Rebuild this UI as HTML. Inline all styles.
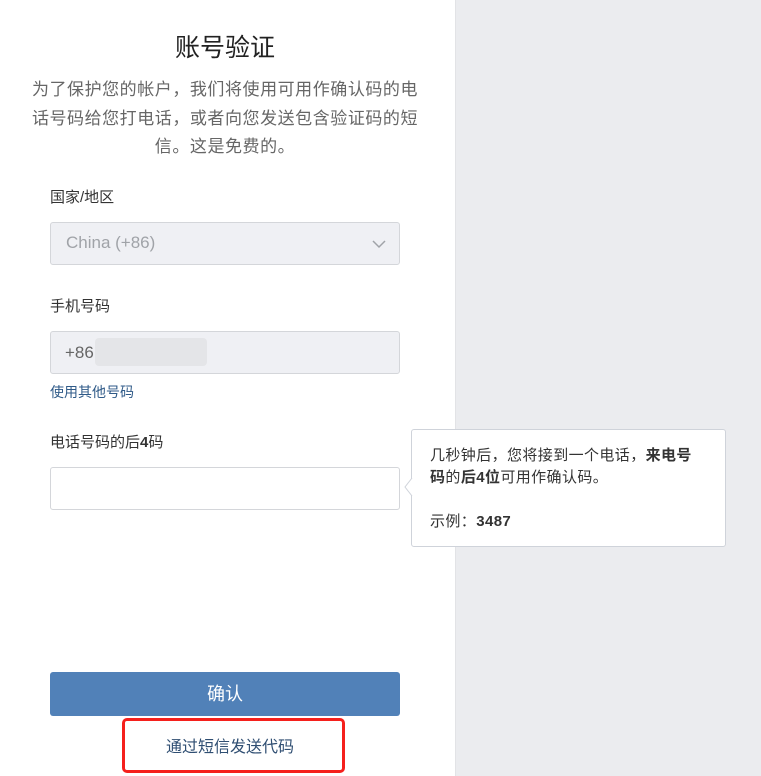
<!DOCTYPE html>
<html><head><meta charset="utf-8"><style>
*{margin:0;padding:0;box-sizing:border-box}
body{width:761px;height:776px;overflow:hidden;background:#ebecef;font-family:"Liberation Sans","Noto Sans CJK SC",sans-serif;position:relative}
.left{position:absolute;left:0;top:0;width:456px;height:776px;background:#fff;border-right:1px solid #e2e3e6}
.a{position:absolute}
h1{position:absolute;top:28px;left:0;width:450px;text-align:center;font-size:25px;font-weight:normal;color:#222}
.p{top:76px;left:20px;width:410px;text-align:center;font-size:17px;letter-spacing:0.55px;line-height:28.5px;color:#666;white-space:nowrap}
.lbl{left:50px;font-size:15px;color:#333}
.box{left:50px;width:350px;height:43px;border:1px solid #d4d6da;border-radius:3px;background:#eff0f4}
.tip{left:411px;top:429px;width:315px;height:118px;background:#fff;border:1px solid #cfd3da;border-radius:3px;padding:15px 18px;font-size:15px;letter-spacing:0.4px;line-height:22px;color:#333;white-space:nowrap}
</style></head><body>
<div class="left"></div>
<h1>账号验证</h1>
<div class="a p">为了保护您的帐户，我们将使用可用作确认码的电<br>话号码给您打电话，或者向您发送包含验证码的短<br>信。这是免费的。</div>
<div class="a lbl" style="top:186px">国家/地区</div>
<div class="a box" style="top:222px"><span class="a" style="left:15px;top:10px;font-size:17px;color:#a0a3a8">China (+86)</span>
<svg class="a" style="left:320px;top:15px" width="16" height="12" viewBox="0 0 16 12"><path d="M2 3l6 6 6-6" fill="none" stroke="#a0a3a8" stroke-width="1.5"/></svg></div>
<div class="a lbl" style="top:295px">手机号码</div>
<div class="a box" style="top:331px"><span class="a" style="left:14px;top:11px;font-size:17px;color:#666">+86</span><div class="a" style="left:44px;top:6px;width:112px;height:28px;background:#e4e5e8;border-radius:4px"></div></div>
<div class="a" style="left:50px;top:382px;font-size:14px;color:#2f5a88">使用其他号码</div>
<div class="a lbl" style="top:431px">电话号码的后<b>4</b>码</div>
<div class="a box" style="top:467px;background:#fff"></div>
<div class="a tip">几秒钟后，您将接到一个电话，<b>来电号</b><br><b>码</b>的<b>后4位</b>可用作确认码。<br><br>示例：<b>3487</b></div>
<svg class="a" style="left:404px;top:478px" width="9" height="18"><path d="M8 0L1 9 8 18" fill="#fff" stroke="#cfd3da"/></svg>
<div class="a" style="left:50px;top:672px;width:350px;height:44px;background:#5181b8;border-radius:3px;color:#fff;font-size:18px;text-align:center;line-height:44px">确认</div>
<div class="a" style="left:122px;top:718px;width:223px;height:55px;border:3px solid #f5201c;border-radius:5px"></div>
<div class="a" style="left:102px;top:733px;width:256px;text-align:center;font-size:16px;color:#2f4e72">通过短信发送代码</div>
</body></html>
